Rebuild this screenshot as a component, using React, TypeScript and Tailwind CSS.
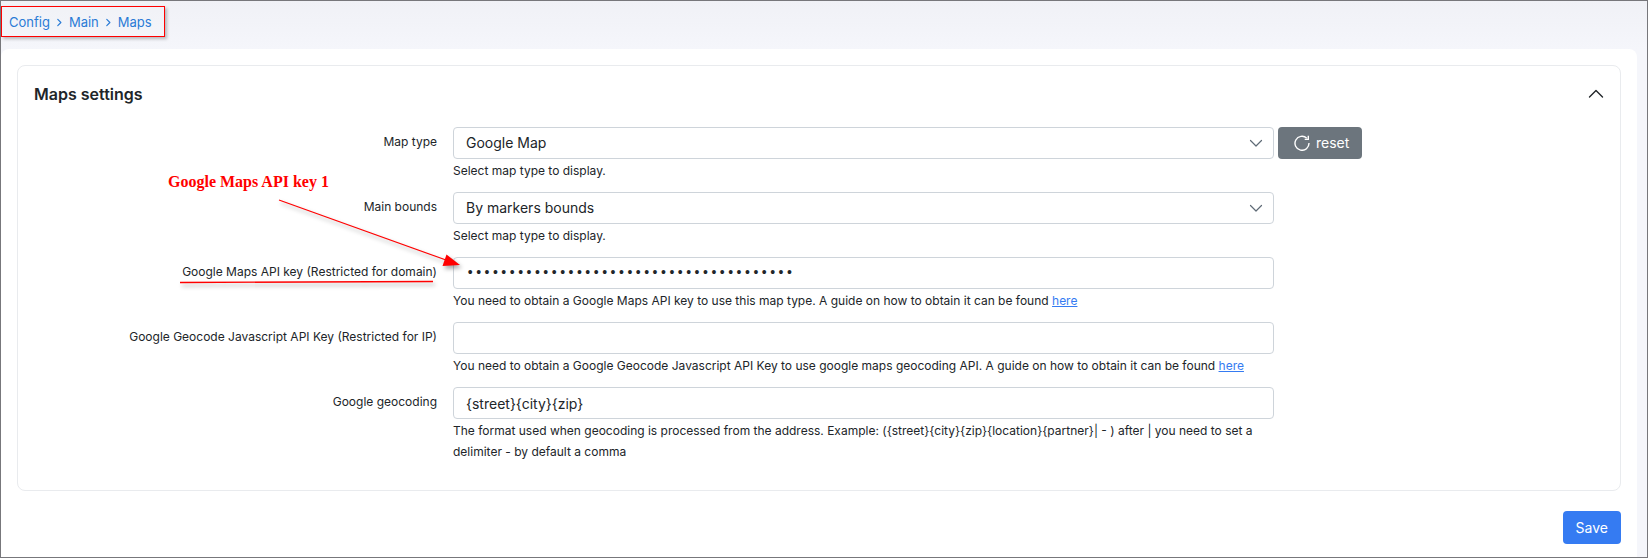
import React from "react";

const boxClass =
  "block h-8 w-full appearance-none rounded border border-[#ced4da] bg-white px-3 text-sm text-[#212529] outline-none";

function Chevron({ className, d, strokeWidth }: { className: string; d: string; strokeWidth: number }) {
  return (
    <svg viewBox="0 0 16 16" fill="none" stroke="currentColor" strokeWidth={strokeWidth} strokeLinecap="round" strokeLinejoin="round" className={className} aria-hidden="true">
      <path d={d} />
    </svg>
  );
}

function Field({
  id,
  label,
  help,
  action,
  children,
}: {
  id: string;
  label: string;
  help: React.ReactNode;
  action?: React.ReactNode;
  children: React.ReactNode;
}) {
  return (
    <div className="grid grid-cols-[403fr_1151fr] gap-4">
      <label htmlFor={id} className="pt-1 text-right text-xs leading-[21px] text-[#212529]">
        {label}
      </label>
      <div className="grid grid-cols-[821fr_326fr] gap-1">
        <div className="min-w-0">
          {children}
          <p className="pt-px text-xs leading-[21px] text-[#212529]">{help}</p>
        </div>
        <div>{action}</div>
      </div>
    </div>
  );
}

function SelectBox({ id, value }: { id: string; value: string }) {
  return (
    <div className="relative">
      <select id={id} defaultValue={value} className={boxClass}>
        <option value={value}>{value}</option>
      </select>
      <Chevron
        className="pointer-events-none absolute top-2 right-[10px] size-4 text-[#5f6b76]"
        d="M2.5 5.5 8 11l5.500-5.500"
        strokeWidth={1.2}
      />
    </div>
  );
}

function HereLink() {
  return (
    <a href="#guide" className="text-[#357bf2] underline">
      here
    </a>
  );
}

function Breadcrumb() {
  const items = ["Config", "Main", "Maps"];
  return (
    <nav aria-label="Breadcrumb" className="w-fit border border-[#ff0000] pt-[3px] pr-3 pl-[7px] shadow-[2px_2px_3px_rgba(0,0,0,0.25)]">
      <ol className="flex h-[26px] items-center text-[13px] text-[#2a7bd6]">
        {items.map((item, i) => (
          <li key={item} className="flex items-center">
            {i > 0 && <Chevron className="mx-1 mb-0.5 size-[11px]" d="M5.500 3.500 10 8 5.500 12.500" strokeWidth={1.700} />}
            <a href={"#" + item.toLowerCase()}>{item}</a>
          </li>
        ))}
      </ol>
    </nav>
  );
}

function Annotation() {
  return (
    <>
      <p className="absolute top-[106px] left-[150px] font-['Liberation_Serif',serif] text-base leading-5 font-bold text-[#ff0000]">
        Google Maps API key 1
      </p>
      <svg
        width="300"
        height="110"
        viewBox="170 190 300 110"
        className="pointer-events-none absolute top-[124px] left-[152px] drop-shadow-[2px_3px_2px_rgba(0,0,0,0.35)]"
        aria-hidden="true"
      >
        <path d="M279 200 446 260" stroke="#ff0000" strokeWidth="1.200" />
        <path d="M460 265 442.500 266 446.500 254.500Z" fill="#ff0000" />
        <path d="M180 282.500 433 281.500" stroke="#ff0000" strokeWidth="1.300" />
      </svg>
    </>
  );
}

export default function App() {
  return (
    <div className="flex min-h-screen flex-col border border-[#77777b] bg-[#f5f6fb] bg-linear-to-b from-[#f0f1f6] to-[#f5f6fb] to-[48px] pt-[5px] font-['Inter',sans-serif] text-[#212529]">
      <Breadcrumb />
      <main className="mt-3 mr-[10px] grow rounded-t-lg bg-white px-4 pt-4 pb-3">
        <section className="relative rounded-lg border border-[#e9ebee] px-4 pt-4 pb-7">
          <header className="flex items-center justify-between">
            <h1 className="text-base leading-6 font-semibold">Maps settings</h1>
            <button type="button" aria-label="Collapse Maps settings" className="flex size-4 items-center justify-center">
              <Chevron className="size-4" d="M1.500 11 8 4.500l6.500 6.500" strokeWidth={1.400} />
            </button>
          </header>

          <form id="maps-form" className="mt-[21px] flex flex-col gap-[11px]">
            <Field
              id="map-type"
              label="Map type"
              help="Select map type to display."
              action={
                <button type="button" className="flex h-8 items-center gap-1.5 rounded bg-[#6c757d] pr-[13px] pl-4 text-sm text-white">
                  <svg viewBox="0 0 16 16" className="size-4" fill="none" stroke="currentColor" strokeWidth="1.400" aria-hidden="true">
                    <path d="M12.800 3.200A7 7 0 1 0 15 8" />
                    <path d="M14.300.800V4.400H10.700" />
                  </svg>
                  reset
                </button>
              }
            >
              <SelectBox id="map-type" value="Google Map" />
            </Field>
            <Field id="main-bounds" label="Main bounds" help="Select map type to display.">
              <SelectBox id="main-bounds" value="By markers bounds" />
            </Field>
            <Field
              id="api-key"
              label="Google Maps API key (Restricted for domain)"
              help={
                <>
                  You need to obtain a Google Maps API key to use this map type. A guide on how to obtain it can be found <HereLink />
                </>
              }
            >
              <input
                id="api-key"
                type="password"
                autoComplete="off"
                defaultValue={"0".repeat(39)}
                className={boxClass + " font-['Liberation_Mono',monospace]"}
              />
            </Field>
            <Field
              id="geocode-key"
              label="Google Geocode Javascript API Key (Restricted for IP)"
              help={
                <>
                  You need to obtain a Google Geocode Javascript API Key to use google maps geocoding API. A guide on how to obtain it can be
                  found <HereLink />
                </>
              }
            >
              <input id="geocode-key" type="text" className={boxClass} />
            </Field>
            <Field
              id="geocoding"
              label="Google geocoding"
              help="The format used when geocoding is processed from the address. Example: ({street}{city}{zip}{location}{partner}| - ) after | you need to set a delimiter - by default a comma"
            >
              <input id="geocoding" type="text" defaultValue="{street}{city}{zip}" className={boxClass} />
            </Field>
          </form>
          <Annotation />
        </section>
        <div className="mt-5 flex justify-end">
          <button type="submit" form="maps-form" className="h-[33px] rounded bg-[#357bf2] px-[13px] text-sm text-white">
            Save
          </button>
        </div>
      </main>
    </div>
  );
}
